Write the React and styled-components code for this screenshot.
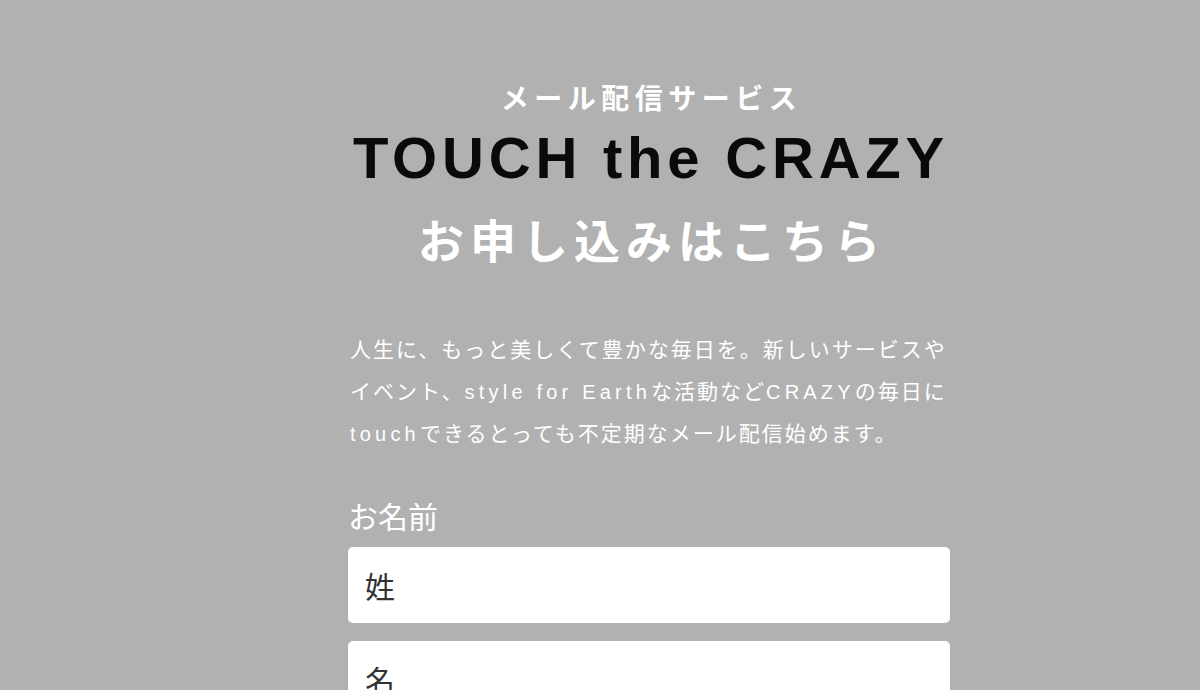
import React from "react";
import styled, { createGlobalStyle } from "styled-components";

const Global = createGlobalStyle`
  html, body { margin: 0; padding: 0; background: #b1b1b1; }
  body { font-family: "Liberation Sans", "Noto Sans CJK JP", sans-serif; }
`;

const Page = styled.div`
  min-height: 690px;
  background: #b1b1b1;
  padding-top: 76px;
  box-sizing: border-box;
`;

const Column = styled.main`
  width: 602px;
  margin-left: 348px;
  display: flex;
  flex-direction: column;
`;

const Header = styled.header`
  display: flex;
  flex-direction: column;
  align-items: center;
  text-align: center;
`;

const Kicker = styled.div`
  font-family: "Noto Sans CJK JP", sans-serif;
  font-weight: 700;
  font-size: 28px;
  line-height: 42px;
  letter-spacing: 5.5px;
  color: #fff;
  padding-left: 5px;
`;

const Brand = styled.h1`
  margin: 4px 0 0;
  font-family: "Liberation Sans", sans-serif;
  font-weight: 700;
  font-size: 58px;
  line-height: 72px;
  letter-spacing: 4.8px;
  color: #0a0a0a;
  padding-left: 4px;
`;

const Title = styled.h2`
  margin: 12px 0 0;
  font-family: "Noto Sans CJK JP", sans-serif;
  font-weight: 700;
  font-size: 46px;
  line-height: 64px;
  letter-spacing: 6px;
  color: #fff;
  padding-left: 6px;
`;

const Lead = styled.p`
  margin: 59px 0 0;
  font-family: "Liberation Sans", "Noto Sans CJK JP", sans-serif;
  font-size: 21px;
  line-height: 41.5px;
  letter-spacing: 2px;
  color: #fff;
  padding-left: 2px;
`;

const Latin = styled.span`
  font-family: "Liberation Sans", sans-serif;
  font-size: 20px;
  letter-spacing: 4.2px;
`;

const Field = styled.section`
  margin-top: 39px;
  display: flex;
  flex-direction: column;
  gap: 18px;
`;

const Label = styled.label`
  font-family: "Noto Sans CJK JP", sans-serif;
  font-size: 30px;
  line-height: 40px;
  color: #fff;
  margin-bottom: -6px;
`;

const Input = styled.input`
  display: block;
  box-sizing: border-box;
  width: 602px;
  height: 76px;
  border: none;
  border-radius: 5px;
  background: #fff;
  padding: 0 17px;
  font-family: "Noto Sans CJK JP", sans-serif;
  font-size: 30px;
  color: #333;
  outline: none;
  &::placeholder { color: #333; opacity: 1; }
`;

export default function App() {
  return (
    <Page>
      <Global />
      <Column>
        <Header>
          <Kicker>メール配信サービス</Kicker>
          <Brand>TOUCH the CRAZY</Brand>
          <Title>お申し込みはこちら</Title>
        </Header>
        <Lead>
          人生に、もっと美しくて豊かな毎日を。新しいサービスや
          <br />
          イベント、<Latin>style for Earth</Latin>な活動など<Latin>CRAZY</Latin>の毎日に
          <br />
          <Latin>touch</Latin>できるとっても不定期なメール配信始めます。
        </Lead>
        <Field>
          <Label>お名前</Label>
          <Input placeholder="姓" />
          <Input placeholder="名" />
        </Field>
      </Column>
    </Page>
  );
}
